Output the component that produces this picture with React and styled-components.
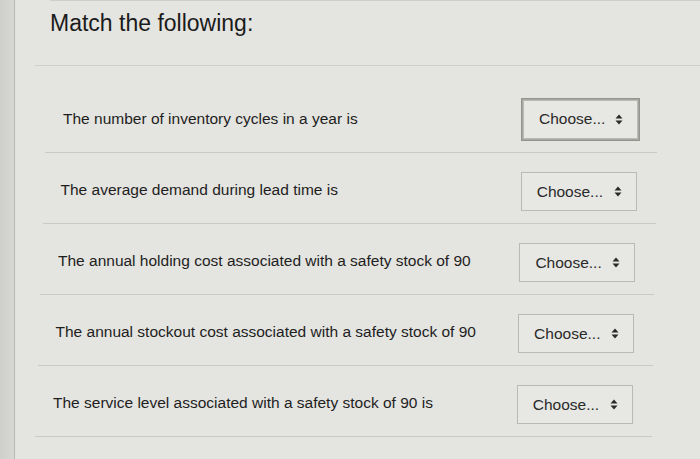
import React from "react";
import styled, { createGlobalStyle } from "styled-components";

const Global = createGlobalStyle`
  html, body { margin: 0; padding: 0; }
  body {
    background: #e3e3df;
    font-family: "Liberation Sans", Arial, Helvetica, sans-serif;
    color: #1f1f1f;
  }
  #root { width: 700px; height: 459px; overflow: hidden; }
`;

const Page = styled.div`
  display: flex;
  width: 700px;
  height: 459px;
`;

const Edge = styled.div`
  width: 14px;
  flex: none;
  background: linear-gradient(90deg, #cfcfcb 0%, #d7d7d3 100%);
  border-right: 1px solid #b7b7b3;
`;

const Main = styled.main`
  flex: 1;
  display: flex;
  flex-direction: column;
  background: #e4e4e0;
`;

const Header = styled.header`
  height: 65px;
  box-sizing: border-box;
  margin-left: 20px;
  border-bottom: 1px solid #cdcdc9;
  display: flex;
  flex-direction: column;
`;

const TopRule = styled.div`
  margin-left: 35px;
  height: 1px;
  background: #cdcdc9;
`;

const Title = styled.h1`
  margin: 0;
  padding: 7px 0 0 15px;
  font-size: 23px;
  line-height: 30px;
  font-weight: 400;
  color: #1b1b1b;
`;

const List = styled.div`
  padding-top: 16px;
  display: flex;
  flex-direction: column;
`;

const Row = styled.div`
  box-sizing: border-box;
  height: 71px;
  width: ${(p) => 612 + p.$i * 1.2}px;
  margin-left: ${(p) => 30 - p.$i * 2.5}px;
  padding: 4px 19px 0 18px;
  border-bottom: 1px solid #c9c9c5;
  display: flex;
  align-items: center;
  justify-content: space-between;
`;

const Prompt = styled.span`
  font-size: 15.5px;
  color: #1e1e1e;
`;

const Select = styled.div`
  box-sizing: border-box;
  width: ${(p) => (p.$focused ? 115 : 116)}px;
  height: ${(p) => (p.$focused ? 39 : 39)}px;
  margin-top: ${(p) => (p.$focused ? 0 : 3)}px;
  display: flex;
  align-items: center;
  justify-content: space-between;
  padding: 0 14px 0 15px;
  border: 1px solid #b9b9b5;
  background: #e7e7e3;
  font-size: 15.5px;
  color: #2a2a2a;
  box-shadow: ${(p) => (p.$focused ? "0 0 0 1px #a6a6a2, 0 0 0 2px #94948f" : "none")};
`;

const Arrows = () => (
  <svg width="8" height="11" viewBox="0 0 8 11" aria-hidden="true">
    <path d="M4 0.5 L7.5 4.5 L0.5 4.5 Z" fill="#2a2a2a" />
    <path d="M4 10.5 L7.5 6.5 L0.5 6.5 Z" fill="#2a2a2a" />
  </svg>
);

const items = [
  "The number of inventory cycles in a year is",
  "The average demand during lead time is",
  "The annual holding cost associated with a safety stock of 90",
  "The annual stockout cost associated with a safety stock of 90",
  "The service level associated with a safety stock of 90 is",
];

export default function App() {
  return (
    <>
      <Global />
      <Page>
        <Edge />
        <Main>
          <TopRule />
          <Header>
            <Title>Match the following:</Title>
          </Header>
          <List>
            {items.map((t, i) => (
              <Row key={i} $i={i}>
                <Prompt>{t}</Prompt>
                <Select $focused={i === 0}>
                  <span>Choose...</span>
                  <Arrows />
                </Select>
              </Row>
            ))}
          </List>
        </Main>
      </Page>
    </>
  );
}
